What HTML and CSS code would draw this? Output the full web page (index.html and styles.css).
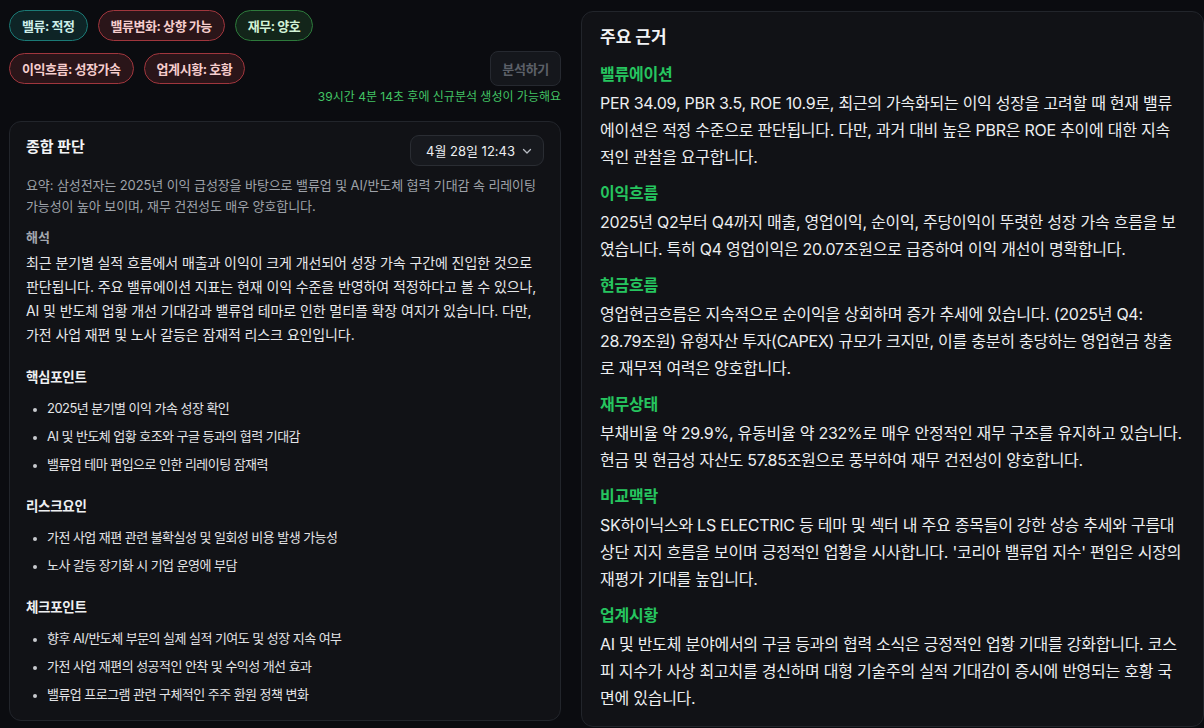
FILE: index.html
```html
<!DOCTYPE html>
<html lang="ko">
<head>
<meta charset="utf-8">
<title>분석</title>
<link rel="stylesheet" href="styles.css">
</head>
<body>
<div class="page">
  <div class="left">
    <div class="badge-row">
      <span class="badge teal">밸류: 적정</span>
      <span class="badge red">밸류변화: 상향 가능</span>
      <span class="badge green">재무: 양호</span>
    </div>
    <div class="badge-row second">
      <div class="badges">
        <span class="badge red">이익흐름: 성장가속</span>
        <span class="badge red">업계시황: 호황</span>
      </div>
      <button class="analyze">분석하기</button>
    </div>
    <div class="countdown">39시간 4분 14초 후에 신규분석 생성이 가능해요</div>

    <section class="card judge">
      <div class="judge-head">
        <h2 class="judge-title">종합 판단</h2>
        <div class="select">
          <span>4월 28일 12:43</span>
          <svg width="12" height="12" viewBox="0 0 12 12" fill="none"><path d="M2.5 4.5 6 8l3.5-3.5" stroke="#b8bcc4" stroke-width="1.3" stroke-linecap="round" stroke-linejoin="round"/></svg>
        </div>
      </div>
      <p class="summary">요약: 삼성전자는 2025년 이익 급성장을 바탕으로 밸류업 및 AI/반도체 협력 기대감 속 리레이팅 가능성이 높아 보이며, 재무 건전성도 매우 양호합니다.</p>
      <div class="label">해석</div>
      <p class="body">최근 분기별 실적 흐름에서 매출과 이익이 크게 개선되어 성장 가속 구간에 진입한 것으로 판단됩니다. 주요 밸류에이션 지표는 현재 이익 수준을 반영하여 적정하다고 볼 수 있으나, AI 및 반도체 업황 개선 기대감과 밸류업 테마로 인한 멀티플 확장 여지가 있습니다. 다만, 가전 사업 재편 및 노사 갈등은 잠재적 리스크 요인입니다.</p>

      <h3 class="sub">핵심포인트</h3>
      <ul class="list">
        <li>2025년 분기별 이익 가속 성장 확인</li>
        <li>AI 및 반도체 업황 호조와 구글 등과의 협력 기대감</li>
        <li>밸류업 테마 편입으로 인한 리레이팅 잠재력</li>
      </ul>

      <h3 class="sub">리스크요인</h3>
      <ul class="list">
        <li>가전 사업 재편 관련 불확실성 및 일회성 비용 발생 가능성</li>
        <li>노사 갈등 장기화 시 기업 운영에 부담</li>
      </ul>

      <h3 class="sub">체크포인트</h3>
      <ul class="list">
        <li>향후 AI/반도체 부문의 실제 실적 기여도 및 성장 지속 여부</li>
        <li>가전 사업 재편의 성공적인 안착 및 수익성 개선 효과</li>
        <li>밸류업 프로그램 관련 구체적인 주주 환원 정책 변화</li>
      </ul>
    </section>
  </div>

  <section class="card basis">
    <h2 class="basis-title">주요 근거</h2>

    <h3 class="g-head">밸류에이션</h3>
    <p class="g-body">PER 34.09, PBR 3.5, ROE 10.9로, 최근의 가속화되는 이익 성장을 고려할 때 현재 밸류에이션은 적정 수준으로 판단됩니다. 다만, 과거 대비 높은 PBR은 ROE 추이에 대한 지속적인 관찰을 요구합니다.</p>

    <h3 class="g-head">이익흐름</h3>
    <p class="g-body">2025년 Q2부터 Q4까지 매출, 영업이익, 순이익, 주당이익이 뚜렷한 성장 가속 흐름을 보였습니다. 특히 Q4 영업이익은 20.07조원으로 급증하여 이익 개선이 명확합니다.</p>

    <h3 class="g-head">현금흐름</h3>
    <p class="g-body">영업현금흐름은 지속적으로 순이익을 상회하며 증가 추세에 있습니다. (2025년 Q4: 28.79조원) 유형자산 투자(CAPEX) 규모가 크지만, 이를 충분히 충당하는 영업현금 창출로 재무적 여력은 양호합니다.</p>

    <h3 class="g-head">재무상태</h3>
    <p class="g-body">부채비율 약 29.9%, 유동비율 약 232%로 매우 안정적인 재무 구조를 유지하고 있습니다. 현금 및 현금성 자산도 57.85조원으로 풍부하여 재무 건전성이 양호합니다.</p>

    <h3 class="g-head">비교맥락</h3>
    <p class="g-body">SK하이닉스와 LS ELECTRIC 등 테마 및 섹터 내 주요 종목들이 강한 상승 추세와 구름대 상단 지지 흐름을 보이며 긍정적인 업황을 시사합니다. '코리아 밸류업 지수' 편입은 시장의 재평가 기대를 높입니다.</p>

    <h3 class="g-head">업계시황</h3>
    <p class="g-body">AI 및 반도체 분야에서의 구글 등과의 협력 소식은 긍정적인 업황 기대를 강화합니다. 코스피 지수가 사상 최고치를 경신하며 대형 기술주의 실적 기대감이 증시에 반영되는 호황 국면에 있습니다.</p>
  </section>
</div>
</body>
</html>
```

FILE: styles.css
```css
* { box-sizing: border-box; }
html, body {
  margin: 0;
  padding: 0;
  background: #0b0c10;
  color: #e8e9ec;
  font-family: Inter, "Noto Sans CJK KR", sans-serif;
  overflow: hidden;
}
h2, h3, p, ul { margin: 0; }

.page {
  display: grid;
  grid-template-columns: 552px 623px;
  column-gap: 20px;
  padding: 10px 0 0 9px;
  height: 728px;
}

.left { display: flex; flex-direction: column; }

.badge-row { display: flex; gap: 10px; align-items: center; }
.badge-row.second { margin-top: 10px; justify-content: space-between; }
.badges { display: flex; gap: 10px; }

.badge {
  display: inline-flex;
  align-items: center;
  height: 31px;
  padding: 0 12px;
  border: 1px solid;
  border-radius: 999px;
  font-size: 13px;
  font-weight: 700;
  letter-spacing: -0.45px;
}
.badge.teal { background: #0e2426; border-color: #1b7a76; color: #cdeee9; }
.badge.red { background: #2a1519; border-color: #a0363d; color: #f6cdcd; }
.badge.green { background: #13251a; border-color: #2d7a3b; color: #d2f2d6; }

.analyze {
  height: 35px;
  padding: 0 11px;
  background: #15171c;
  border: 1px solid #262930;
  border-radius: 8px;
  color: #5c6068;
  font-family: inherit;
  font-size: 13px;
  font-weight: 700;
  letter-spacing: -0.3px;
}

.countdown {
  margin-top: 3px;
  text-align: right;
  font-size: 12px;
  line-height: 16px;
  color: #42c364;
}

.card {
  background: #111216;
  border: 1px solid #22252b;
  border-radius: 12px;
}

.judge {
  margin-top: 16px;
  padding: 13px 16px 12px;
  flex: 0 0 auto;
  height: 600px;
}
.judge-head { display: flex; justify-content: space-between; align-items: flex-start; }
.judge-title { font-size: 15px; font-weight: 700; line-height: 24px; color: #f2f3f5; }
.select {
  display: flex;
  align-items: center;
  justify-content: space-between;
  width: 134px;
  height: 31px;
  padding: 0 10px 0 15px;
  background: #17191e;
  border: 1px solid #2a2d33;
  border-radius: 9px;
  font-size: 13px;
  color: #eceef1;
}

.summary {
  margin-top: 9px;
  font-size: 13px;
  line-height: 21px;
  color: #9ea2a9;
  letter-spacing: -0.1px;
}
.label {
  margin-top: 10px;
  font-size: 13px;
  font-weight: 700;
  line-height: 20px;
  color: #a3a7ae;
}
.body {
  margin-top: 4px;
  font-size: 14px;
  line-height: 24px;
  color: #e6e7ea;
  letter-spacing: -0.1px;
}
.sub {
  margin-top: 20px;
  font-size: 13.5px;
  font-weight: 700;
  line-height: 20px;
  color: #eef0f2;
  letter-spacing: -0.3px;
}
.body + .sub { margin-top: 20px; }
.list {
  margin-top: 7px;
  padding-left: 21px;
  font-size: 13px;
  line-height: 28px;
  color: #e3e4e7;
  letter-spacing: -0.55px;
}
.list li::marker { color: #c8cace; font-size: 11px; }
.list + .sub { margin-top: 18px; }

.basis {
  margin-top: 1px;
  height: 716px;
  padding: 14px 19px 0 18px;
}
.basis-title { font-size: 17px; font-weight: 700; line-height: 22px; color: #f2f3f5; }
.g-head {
  margin-top: 10px;
  font-size: 16px;
  font-weight: 700;
  line-height: 24px;
  color: #26c55f;
  letter-spacing: -0.2px;
}
.basis-title + .g-head { margin-top: 14px; }
.g-body {
  margin-top: 4px;
  font-size: 16px;
  line-height: 27px;
  color: #eceef0;
  letter-spacing: -0.25px;
}
```
